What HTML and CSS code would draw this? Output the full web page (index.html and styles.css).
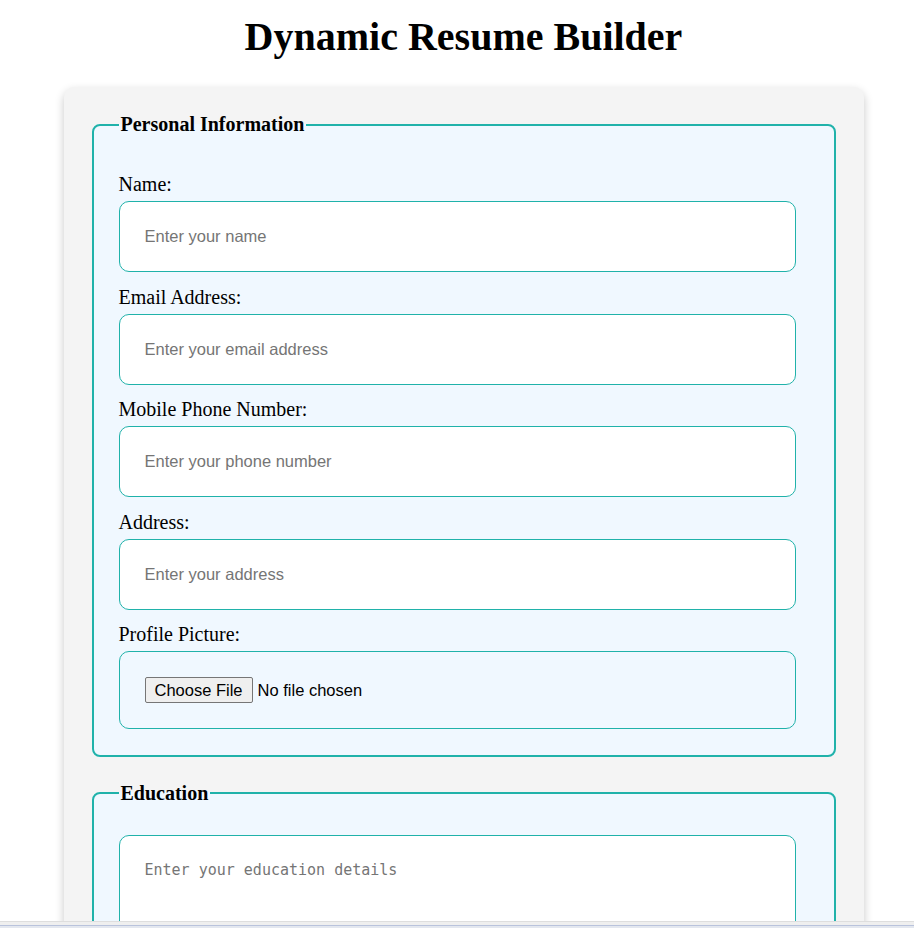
FILE: index.html
```html
<!DOCTYPE html>
<html lang="en">
<head>
<meta charset="utf-8">
<title>Dynamic Resume Builder</title>
<link rel="stylesheet" href="styles.css">
</head>
<body>
<div class="page">
  <h1 class="title">Dynamic Resume Builder</h1>
  <form class="container">
    <fieldset class="section">
      <legend class="section-title">Personal Information</legend>
      <label class="field-label" for="name">Name:</label>
      <input class="field" type="text" id="name" placeholder="Enter your name">
      <label class="field-label" for="email">Email Address:</label>
      <input class="field" type="email" id="email" placeholder="Enter your email address">
      <label class="field-label" for="phone">Mobile Phone Number:</label>
      <input class="field" type="tel" id="phone" placeholder="Enter your phone number">
      <label class="field-label" for="address">Address:</label>
      <input class="field" type="text" id="address" placeholder="Enter your address">
      <label class="field-label" for="photo">Profile Picture:</label>
      <input class="field file-field" type="file" id="photo">
    </fieldset>
    <fieldset class="section">
      <legend class="section-title">Education</legend>
      <textarea class="field area" id="education" placeholder="Enter your education details"></textarea>
    </fieldset>
  </form>
</div>
<div class="hscroll"></div>
</body>
</html>
```
FILE: styles.css
```css
html {
  overflow: hidden;
}

body {
  margin: 0;
  font-family: "Liberation Serif", "Times New Roman", serif;
  color: #000;
  background: #fff;
}

.page {
  width: 927px;
}

.title {
  font-size: 40px;
  line-height: 46px;
  font-weight: bold;
  text-align: center;
  margin: 14px 0 27px;
}

.container {
  box-sizing: border-box;
  width: 800px;
  margin: 0 auto;
  padding: 26px 28px;
  background: #f4f4f4;
  border-radius: 10px;
  box-shadow: 0 4px 10px rgba(0, 0, 0, 0.22);
}

.section {
  margin: 0 0 25px;
  min-width: 0;
  border: 2px solid #20b2aa;
  border-radius: 8px;
  background: #f0f8ff;
  padding: 30.5px 38px 18.5px 25px;
}

.section-title {
  font-size: 20px;
  line-height: 23px;
  font-weight: bold;
  padding: 0 2px;
}

.field-label {
  display: block;
  font-size: 20px;
  line-height: 22px;
  padding-top: 6.5px;
  margin: 0 0 6px;
}

.field {
  display: block;
  box-sizing: border-box;
  width: 100%;
  height: 71px;
  margin: 0 0 7px;
  padding: 25px;
  border: 1px solid #20b2aa;
  border-radius: 10px;
  background: #fff;
  font-family: "Liberation Sans", Arial, sans-serif;
  font-size: 16.5px;
  color: #000;
}

.field::placeholder {
  color: #757575;
}

.file-field {
  height: 78px;
  background: transparent;
}

.file-field::file-selector-button {
  font-family: "Liberation Sans", Arial, sans-serif;
  font-size: 16.5px;
  height: 26px;
  padding: 0 9px;
  margin-right: 5px;
  border: 1px solid #767676;
  border-radius: 2px;
  background: #efefef;
  color: #000;
}

.area {
  height: 160px;
  resize: vertical;
  font-family: "DejaVu Sans Mono", monospace;
  font-size: 15px;
}

.hscroll {
  position: fixed;
  left: 0;
  right: 0;
  bottom: 0;
  height: 7px;
  background: linear-gradient(#dedede 0, #dedede 1px, #efefef 1px, #efefef 4px, #b9c3dc 4px, #b9c3dc 5px, #e3e7ef 5px);
}
```
